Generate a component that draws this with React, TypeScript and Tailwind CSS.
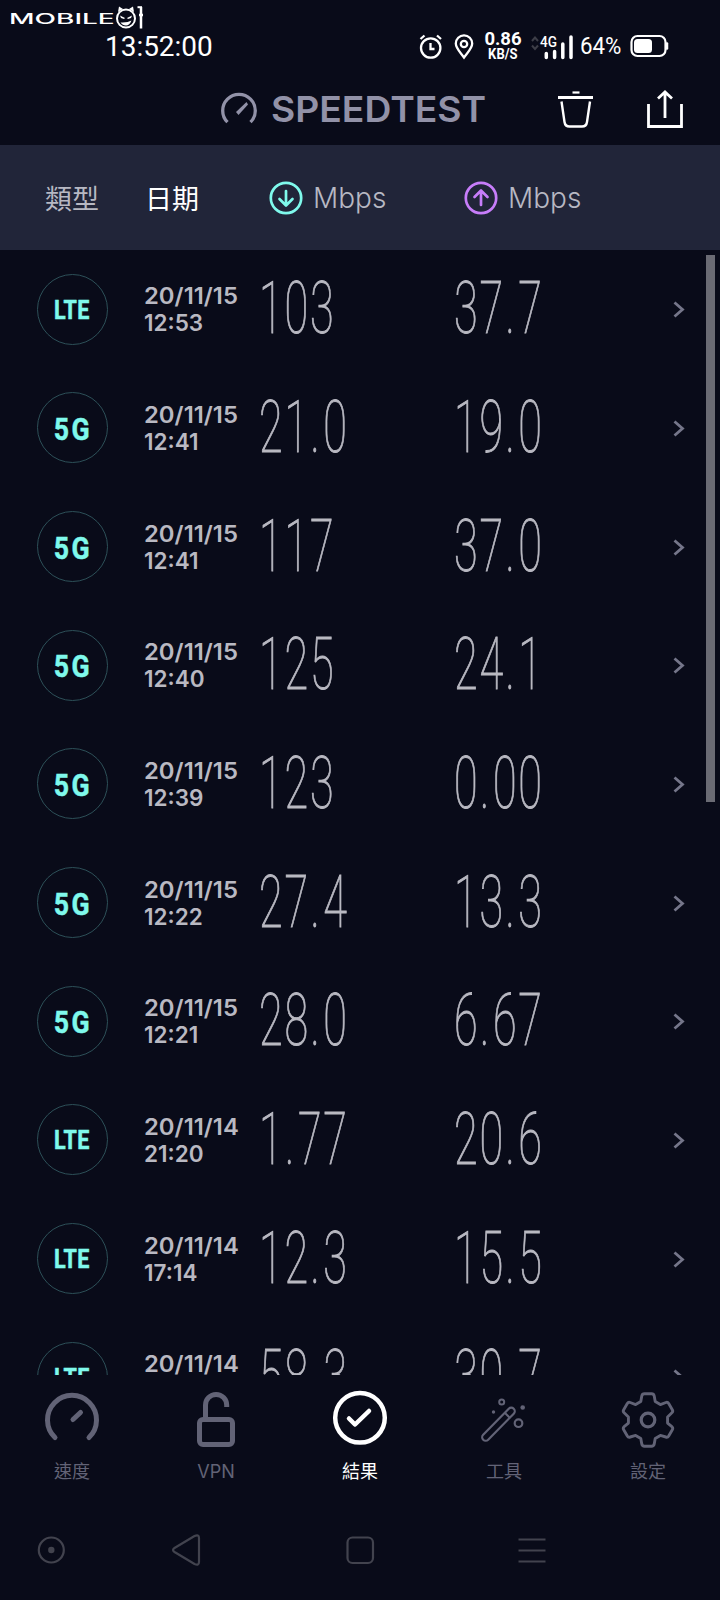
import { ReactNode } from 'react';

interface Result {
  type: 'LTE' | '5G';
  date: string;
  time: string;
  down: string;
  up: string;
}

const results: Result[] = [
  { type: 'LTE', date: '20/11/15', time: '12:53', down: '103', up: '37.7' },
  { type: '5G', date: '20/11/15', time: '12:41', down: '21.0', up: '19.0' },
  { type: '5G', date: '20/11/15', time: '12:41', down: '117', up: '37.0' },
  { type: '5G', date: '20/11/15', time: '12:40', down: '125', up: '24.1' },
  { type: '5G', date: '20/11/15', time: '12:39', down: '123', up: '0.00' },
  { type: '5G', date: '20/11/15', time: '12:22', down: '27.4', up: '13.3' },
  { type: '5G', date: '20/11/15', time: '12:21', down: '28.0', up: '6.67' },
  { type: 'LTE', date: '20/11/14', time: '21:20', down: '1.77', up: '20.6' },
  { type: 'LTE', date: '20/11/14', time: '17:14', down: '12.3', up: '15.5' },
  { type: 'LTE', date: '20/11/14', time: '17:10', down: '58.3', up: '30.7' },
];

function StatusBar() {
  return (
    <div className="h-[72px] pt-[6px] text-white">
      {/* Logo */}
      <div className="flex h-[24px] items-center pl-[9px]">
        <span className="w-[105px] whitespace-nowrap">
          <span className="inline-block origin-left scale-x-[2] font-['Inter'] text-[14px] leading-[24px] font-medium">MOBILE</span>
        </span>
        <svg width="30" height="24" viewBox="0 0 30 24" fill="none">
          <circle cx="12" cy="12.500" r="9" stroke="#fff" strokeWidth="2" />
          <path d="M4 6 5 .5 9 3M20 6 19 .5 15 3" fill="#fff" />
          <path d="M6 9.500l5 2.500-1 1-3-1zM18 9.500l-5 2.500 1 1 3-1zM6.500 16.500q7 .5 11-2-2 5-5.500 5-3.500 0-5.500-3z" fill="#fff" />
          <path d="M23.500 1.200h4.500" stroke="#fff" strokeWidth="2" />
          <path d="M27 1v21.500M25 9h4" stroke="#fff" strokeWidth="2.500" />
        </svg>
      </div>
      <div className="flex h-[32px] items-center pl-[105px]">
        <span className="w-[313px] whitespace-nowrap pt-px">
          <span className="inline-block origin-left scale-x-[0.98] font-['Roboto'] text-[28.500px] leading-[32px]">13:52:00</span>
        </span>
        <svg width="26" height="28" viewBox="0 0 26 28" fill="none" stroke="#fff" strokeWidth="2.300">
          <circle cx="12.700" cy="16" r="9.700" />
          <path d="M12.500 11v6h4M2.500 7l4-3.500M23 7 19 3.500" />
        </svg>
        <svg className="ml-[9px]" width="22" height="28" viewBox="0 0 22 28" fill="none" stroke="#fff" strokeWidth="2.300">
          <path d="M11 25.500C8 21 2.800 16.500 2.800 11.500a8.200 8.200 0 0 1 16.400 0c0 5-5.200 9.500-8.200 14z" />
          <circle cx="11" cy="12" r="3.200" />
        </svg>
        <div className="ml-[8px] flex w-[40px] flex-col items-center pt-px font-['Roboto'] font-bold">
          <span className="text-[18.500px] leading-[15px]">0.86</span>
          <span className="scale-x-[0.93] text-[14px] leading-[14px]">KB/S</span>
        </div>
        <svg className="ml-[6px]" width="46" height="28" viewBox="0 0 46 28">
          <path d="M3 9l3-3.500L9 9M3 13.500l3 3.500 3-3.500" stroke="#3d3e48" strokeWidth="2" fill="none" />
          <text x="11" y="14.500" fill="#fff" fontFamily="Roboto" fontSize="15.500" fontWeight="500" textLength="17" lengthAdjust="spacingAndGlyphs">4G</text>
          <path d="M17.300 21.500v4M25.600 19.500v6M33.800 12V25.500M42 5v20.500" stroke="#fff" strokeWidth="3.500" strokeLinecap="round" />
        </svg>
        <span className="ml-[5px] w-[49px] whitespace-nowrap pt-px font-['Roboto'] text-[23px] leading-[32px]">
          <span className="inline-block origin-left scale-x-[0.97]">64%</span>
        </span>
        <svg width="40" height="28" viewBox="0 0 40 28" fill="none">
          <rect x="2.500" y="4" width="34" height="20" rx="6" stroke="#fff" strokeWidth="2.200" />
          <rect x="5" y="7" width="18" height="14" rx="3.500" fill="#fff" />
          <path d="M38 11.500v5" stroke="#fff" strokeWidth="2.500" strokeLinecap="round" />
        </svg>
      </div>
    </div>
  );
}

function TitleBar() {
  return (
    <header className="flex h-[73px] items-center pl-[221px] text-[#9292a8]">
      <svg width="38" height="34" viewBox="0 0 38 34" fill="none">
        <path d="M6.500 30.200A16.300 16.300 0 1 1 29.500 30.200" stroke="currentColor" strokeWidth="3.300" />
        <path d="M25.500 10 15 20l2.500 3 9.500-10.500z" fill="currentColor" />
      </svg>
      <span className="ml-[12px] w-[286px] whitespace-nowrap pt-px">
        <span className="inline-block origin-left scale-x-[1.035] font-['Inter'] text-[36px] leading-[40px] font-semibold">SPEEDTEST</span>
      </span>
      <svg width="38" height="40" viewBox="0 0 38 40" fill="none" stroke="#fff">
        <path d="M15.500 3.500h7" strokeWidth="2.200" />
        <path d="M1 8.500h35" strokeWidth="2.800" />
        <path d="M4.500 12.500l3 20.500q.6 4.500 5 4.500h12.500q4.400 0 5-4.500l3-20.500" strokeWidth="2.400" />
      </svg>
      <svg className="ml-[51px]" width="40" height="40" viewBox="0 0 40 40" fill="none" stroke="#fff" strokeWidth="2.800">
        <path d="M2.500 15V37.500h33V15M19 29V4M12 9.500l7-6.500 7 6.500" />
      </svg>
    </header>
  );
}

function SpeedHeading({ up }: { up?: boolean }) {
  return (
    <div className="flex w-[195px] items-center gap-[10px]">
      <svg width="34" height="34" viewBox="0 0 34 34" fill="none" stroke={up ? '#c77dfa' : '#7ff9ec'} strokeWidth="2.700" strokeLinecap="round" strokeLinejoin="round">
        <circle cx="17" cy="17" r="15.200" />
        <path d={up ? 'M17 24V10M10.500 16 17 9.500l6.500 6.500' : 'M17 10v14M10.500 18l6.500 6.500 6.500-6.500'} />
      </svg>
      <span className="pt-px font-['Inter'] text-[28px] leading-[34px] font-light">Mbps</span>
    </div>
  );
}

function TableHeading() {
  return (
    <div className="flex h-[105px] items-center bg-[#212539] pl-[45px] font-['Noto_Sans_CJK_TC'] text-[27px] leading-[40px] text-[#b7b8c3]">
      <span className="w-[100px]">類型</span>
      <span className="w-[124px] text-white">日期</span>
      <SpeedHeading />
      <SpeedHeading up />
    </div>
  );
}

function Speed({ value }: { value: string }) {
  const [whole, decimals] = value.split('.');

  return (
    <span className="w-[195px] whitespace-nowrap">
      <span className="inline-block origin-left scale-x-[0.6] font-['Roboto'] text-[72px] leading-[80px] font-thin tracking-[3px] text-[#b9b9c2] [-webkit-text-stroke:1px_#b9b9c2]">
        {whole}
        {decimals && <span className="mr-[3px] ml-px">.</span>}
        {decimals}
      </span>
    </span>
  );
}

function ResultRow({ result }: { result: Result }) {
  return (
    <div className="flex h-[118.670px] shrink-0 items-center pl-[36.500px]">
      <div className="flex size-[71px] items-center justify-center rounded-full border-[1.500px] border-[#2d5058] pt-[2px] font-['Roboto'] font-bold text-[#7ff9ec]">
        {result.type === 'LTE' ? (
          <span className="scale-x-[0.86] text-[25px] leading-none tracking-[0.500px] [-webkit-text-stroke:0.500px]">LTE</span>
        ) : (
          <span className="pl-[3px] scale-x-[0.83] text-[32px] leading-none tracking-[3px] [-webkit-text-stroke:0.500px]">5G</span>
        )}
      </div>
      <div className="ml-[36.500px] flex w-[115px] flex-col items-start whitespace-nowrap font-['Inter'] text-[22.500px] leading-[27px] font-semibold text-[#b9b9c2]">
        <span className="origin-left scale-x-[1.06]">{result.date}</span>
        <span>{result.time}</span>
      </div>
      <Speed value={result.down} />
      <Speed value={result.up} />
      <svg className="ml-[23.500px]" width="12" height="18" viewBox="0 0 12 18" fill="none" stroke="#75768a" strokeWidth="2.800">
        <path d="M1.500 2.500 9.500 9.500 1.500 16.500" />
      </svg>
    </div>
  );
}

function Tab({ label, active, children }: { label: string; active?: boolean; children: ReactNode }) {
  return (
    <div className={active ? 'flex flex-1 flex-col items-center text-white' : 'flex flex-1 flex-col items-center text-[#626376]'}>
      <svg width="60" height="60" viewBox="0 0 60 60" fill="none" stroke="currentColor" strokeLinecap="round" strokeLinejoin="round">
        {children}
      </svg>
      <span className="mt-[10px] font-['Inter','Noto_Sans_CJK_TC'] text-[18px] leading-[26px]">{label}</span>
    </div>
  );
}

function TabBar() {
  return (
    <nav className="flex h-[125.500px] pt-[14px]">
      <Tab label="速度">
        <path d="M13 48.500A24.500 24.500 0 1 1 47 48.500M31 30.500 38.500 23.500" strokeWidth="5" />
      </Tab>
      <Tab label="VPN">
        <rect x="13.500" y="30.500" width="33" height="25" rx="3.500" strokeWidth="5" />
        <path d="M19.500 30V16a10.600 10.600 0 0 1 21.200 0v2" strokeWidth="5" strokeLinecap="butt" />
      </Tab>
      <Tab label="結果" active>
        <circle cx="30" cy="28.800" r="24.800" strokeWidth="4.500" />
        <path d="M19 29.500l6 6L39 22" strokeWidth="4.500" />
      </Tab>
      <Tab label="工具">
        <rect x="2.700" y="31.700" width="43.500" height="7" rx="3.500" transform="rotate(-45.500 24.500 35.200)" strokeWidth="2.200" />
        <path d="M31.500 24.500l4 4" strokeWidth="2" />
        <circle cx="27.700" cy="13" r="2.500" strokeWidth="2" />
        <circle cx="44.500" cy="34.200" r="3.800" strokeWidth="2.200" />
        <circle cx="48.700" cy="18.500" r="2.300" fill="currentColor" stroke="none" />
        <circle cx="19.500" cy="23" r="1.700" fill="currentColor" stroke="none" />
      </Tab>
      <Tab label="設定">
        <path transform="translate(-.9 -.4) scale(1.030)" d="M23 12.500 24 7q.5-2 2.500-2h7q2 0 2.500 2l1 5.500 5 3 5.300-2q1.800-.6 2.800 1l3.500 6q1 1.700-.4 3L49 27.500v6l4.200 3.500q1.400 1.300.4 3l-3.500 6q-1 1.600-2.800 1l-5.300-1.500-5 3-1 5.500q-.5 2-2.500 2h-7q-2 0-2.500-2l-1-5.500-5-3-5.300 1.500q-1.800.6-2.800-1l-3.500-6q-1-1.700.4-3L11 33.500v-6L6.800 23.500q-1.400-1.300-.4-3l3.500-6q1-1.600 2.800-1l5.300 2z" strokeWidth="2.800" />
        <circle cx="30" cy="31" r="6.800" strokeWidth="3.200" />
      </Tab>
    </nav>
  );
}

function SystemNav() {
  return (
    <div className="flex h-[100px] items-center pl-[37px]">
      <svg width="560" height="34" viewBox="0 0 560 34" fill="none" stroke="#42434e" strokeWidth="2.200">
        <circle cx="14.300" cy="17" r="12.500" />
        <circle cx="14.300" cy="17" r="3.200" fill="#42434e" stroke="none" />
        <path d="M137.500 15 157.500 3q4.500-2 4.500 2v24q0 4-4.500 2l-20-12q-3-2 0-4z" />
        <rect x="310.500" y="4.500" width="25.500" height="25.500" rx="5" />
        <path d="M481.500 6.500h27M481.500 17.500h27M481.500 28.500h27" />
      </svg>
    </div>
  );
}

export default function App() {
  return (
    <div className="flex h-[1600px] w-[720px] flex-col overflow-hidden bg-[#090b19]">
      <StatusBar />
      <TitleBar />
      <TableHeading />
      <div className="relative flex h-[1124.500px] flex-col overflow-hidden">
        {results.map((result, i) => (
          <ResultRow key={i} result={result} />
        ))}
        <div className="absolute top-[5px] right-[5px] h-[547px] w-[9px] bg-[#6a6b74]" />
      </div>
      <TabBar />
      <SystemNav />
    </div>
  );
}
